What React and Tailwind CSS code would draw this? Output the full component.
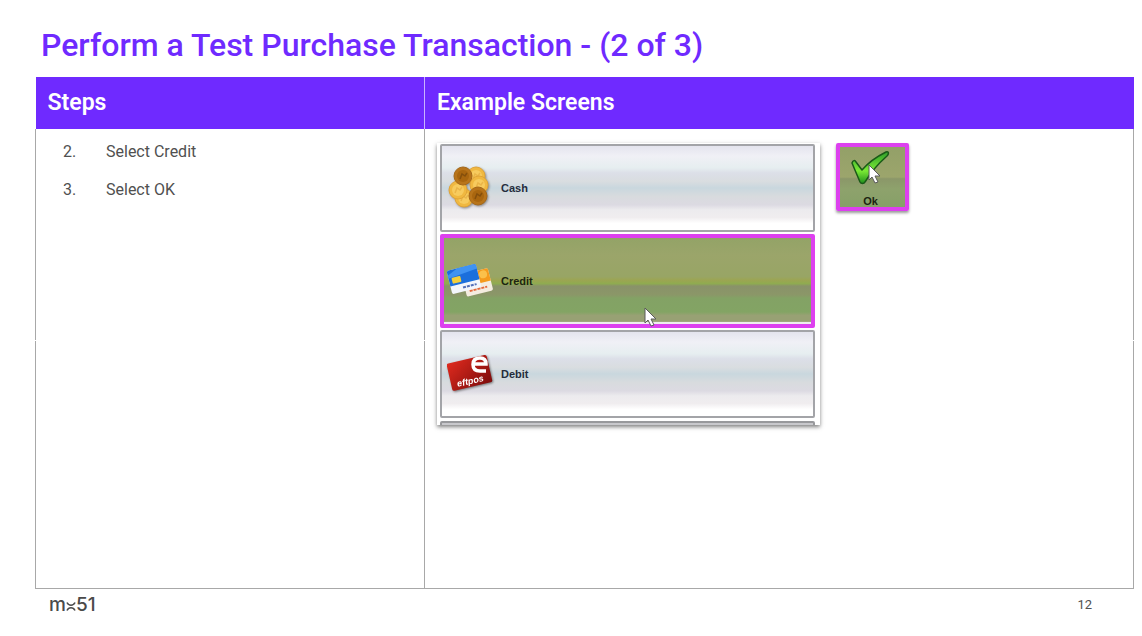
import React from 'react';
import clsx from 'clsx';

// --- DATA ---
const STEPS = [
  { no: '2.', text: 'Select Credit' },
  { no: '3.', text: 'Select OK' },
];

const PAYMENTS = [
  { id: 'cash', label: 'Cash', Icon: CoinsIcon },
  { id: 'credit', label: 'Credit', Icon: CardsIcon, selected: true },
  { id: 'debit', label: 'Debit', Icon: EftposIcon },
];

// --- ICONS ---
function Coin({ x, y, dark }) {
  return (
    <g>
      <circle cx={x} cy={y} r="9" fill={dark ? '#b8741a' : '#f0b840'} stroke={dark ? '#a5681a' : '#e0a437'} strokeWidth="1" />
      <circle cx={x} cy={y} r="6" fill={dark ? '#a9660f' : '#f7cb5e'} />
      <path d={`M${x - 3} ${y + 3}l2-5 3 2 2-3`} fill="none" stroke={dark ? '#854f0c' : '#eab548'} strokeWidth="1.5" />
    </g>
  );
}

function CoinsIcon() {
  return (
    <svg width="44" height="44" viewBox="0 0 44 44" aria-hidden="true" className="shrink-0 drop-shadow-[1px_1px_1px_#55555599]">
      <Coin x={28} y={10} />
      <Coin x={16} y={32} />
      <Coin x={31} y={19} />
      <Coin x={10} y={24} />
      <Coin x={15} y={10} dark />
      <Coin x={30} y={30} dark />
    </svg>
  );
}

function CardsIcon() {
  return (
    <svg width="46" height="44" viewBox="0 0 46 44" aria-hidden="true" className="shrink-0">
      <g transform="rotate(-14 30 24)">
        <rect x="17" y="12" width="27" height="23" rx="2" fill="#f4ece0" />
        <path d="M19 12h23a2 2 0 0 1 2 2v11H17V14a2 2 0 0 1 2-2z" fill="#f59a1c" />
        <circle cx="38" cy="17" r="4" fill="#fbc04a" />
        <path d="M21 30h18" stroke="#e5683a" strokeWidth="2" strokeDasharray="3 1" />
      </g>
      <g transform="rotate(-14 17 20)">
        <rect x="2" y="8" width="30" height="24" rx="2" fill="#f3f6fb" />
        <path d="M4 8h26a2 2 0 0 1 2 2v14H2V10a2 2 0 0 1 2-2z" fill="#1b6fdc" />
        <path d="M13 8h17a2 2 0 0 1 2 2v3L2 16v-3z" fill="#3f93f2" />
        <rect x="5" y="16" width="9" height="6" rx="1" fill="#f2cf3c" />
        <path d="M14 28h14" stroke="#5470b8" strokeWidth="2" strokeDasharray="3 1" />
      </g>
    </svg>
  );
}

function EftposIcon() {
  return (
    <svg width="46" height="44" viewBox="0 0 46 44" aria-hidden="true" className="shrink-0 drop-shadow-[1px_1px_1px_#33333399]">
      <defs>
        <linearGradient id="eftpos" x1="0" y1="0" x2="1" y2="1">
          <stop offset="0" stopColor="#e02a1e" />
          <stop offset="1" stopColor="#7d0c0c" />
        </linearGradient>
      </defs>
      <g transform="rotate(-13 22 21)">
        <rect x="2" y="7" width="41" height="28" rx="2" fill="url(#eftpos)" />
        <text x="8" y="32" fill="#fff" fontFamily="Liberation Sans, sans-serif" fontWeight="700" fontStyle="italic" fontSize="9">eftpos</text>
      </g>
      <path d="M26 12h13c0-4-2-6-6-6s-7 2-7 6.500 3 6.500 7 6.500h6" fill="none" stroke="#fff" strokeWidth="3.500" />
    </svg>
  );
}

function CheckIcon() {
  return (
    <svg width="40" height="34" viewBox="0 0 40 34" aria-hidden="true">
      <defs>
        <linearGradient id="check" x1="0" y1="0" x2="0" y2="1">
          <stop offset="0" stopColor="#2f9e2a" />
          <stop offset="0.6" stopColor="#7bea35" />
          <stop offset="1" stopColor="#1f8f1c" />
        </linearGradient>
      </defs>
      <path
        d="M1 12c1-3 3-3 4-1l6 8C17 12 25 6 35 1c3-1 3 2 1 4C28 12 20 21 14 31c-1 2-4 2-5 0z"
        fill="url(#check)"
        stroke="#1a5a17"
        strokeWidth="1.5"
        strokeLinejoin="round"
      />
    </svg>
  );
}

function Pointer({ className }) {
  return (
    <svg width="13" height="20" viewBox="0 0 13 20" aria-hidden="true" className={className}>
      <path d="M1 1v15l3-3 3 6 3-1-3-6h5z" fill="#fff" stroke="#5b5b5b" strokeWidth="1" strokeLinejoin="round" />
    </svg>
  );
}

function Logo() {
  return (
    <div className="flex items-baseline font-[Inter,sans-serif] text-[19px] leading-6 font-medium text-[#4a4a4a]" aria-label="mx51">
      <span>m</span>
      <svg width="10" height="9" viewBox="0 0 10 9" aria-hidden="true">
        <path d="M1 .5c1 2 2 2.700 4 2.700S8 2.500 9 .5M1 8.500c1-2 2-2.700 4-2.700s3 .7 4 2.700" fill="none" stroke="currentColor" strokeWidth="1.600" />
      </svg>
      <span>51</span>
    </div>
  );
}

// --- POS SCREENS ---
function PaymentButton({ label, Icon, selected }) {
  return (
    <button
      type="button"
      className={clsx(
        'relative flex w-full shrink-0 items-center gap-[7px] rounded-xs text-left text-[11px] font-bold',
        selected
          ? 'h-[94px] border-4 border-[#dd40ef] bg-[linear-gradient(#93a367_0%,#9ba56a_20%,#98a565_45%,#9ca552_49%,#8fab50_53%,#899269_56%,#8b9768_66%,#83a265_70%,#83a464_86%,#98a174_90%,#98a174_97%,#eeeeee_98%)] pr-1 pl-0.5 text-[#1c2412]'
          : 'h-[88px] border-2 border-[#a3a4a8] bg-[linear-gradient(#e4e4ee_0%,#f0f0f6_12%,#e6eef0_26%,#dcdfe8_32%,#d9dde0_42%,#c9d7de_50%,#d8dbde_60%,#dcdae2_70%,#ecebee_76%,#f0edef_85%,#ffffff_92%)] px-1 text-[#252d3c]'
      )}
    >
      <span className="flex w-12 justify-center">
        <Icon />
      </span>
      {label}
      {selected && <Pointer className="absolute top-[69px] left-[200px]" />}
    </button>
  );
}

function PaymentScreen() {
  return (
    <div className="flex h-[282px] w-[383px] shrink-0 flex-col gap-0.5 overflow-hidden bg-white pt-px pr-[5px] pl-[3px] font-['Liberation_Sans',sans-serif] shadow-[0_2px_4px_#00000080]">
      {PAYMENTS.map(({ id, ...p }) => <PaymentButton key={id} {...p} />)}
      <div className="mt-px h-2 shrink-0 rounded-xs border-2 border-[#98999c] bg-[#c8c8cc]" />
    </div>
  );
}

function OkButton() {
  return (
    <button
      type="button"
      className="relative flex h-[68px] w-[73px] shrink-0 flex-col items-center justify-between rounded-xs border-4 border-[#dd40ef] bg-[linear-gradient(#93a068_0%,#9ca56c_50%,#8b9769_53%,#8ea26c_70%,#86a068_100%)] pt-1 pr-1 font-['Liberation_Sans',sans-serif] text-[11px] leading-3 font-bold text-[#1c2412] shadow-[0_2px_3px_#00000066]"
    >
      <CheckIcon />
      Ok
      <Pointer className="absolute top-[17px] left-[28px]" />
    </button>
  );
}

// Short break in the column rule
function RuleBreak({ className }) {
  return <span className={clsx('absolute top-[211px] h-px w-0.5 bg-white', className)} />;
}

export default function App() {
  return (
    <main className="min-h-screen bg-white pt-6 pr-2 pl-[35px] font-[Roboto,sans-serif] text-[#505050]">
      <h1 className="pl-1.5 text-[32px] leading-[42px] font-medium text-[#6f2aff]">Perform a Test Purchase Transaction - (2 of 3)</h1>

      <table className="mt-[11px] w-full table-fixed border-collapse">
        <thead>
          <tr className="h-[52px] bg-[#6f2aff] text-left text-[23px] leading-7 text-white">
            <th className="w-[389px] border-r border-[#c9b3ff] px-3 py-0 font-semibold">Steps</th>
            <th className="px-3 py-0 font-semibold">Example Screens</th>
          </tr>
        </thead>
        <tbody>
          <tr className="h-[459px] align-top">
            <td className="relative border border-t-0 border-[#a8a8a8] pt-[11px] pl-[27px]">
              <ol className="space-y-[14px] text-[16px] leading-6">
                {STEPS.map(s => (
                  <li key={s.no} className="flex">
                    <span className="w-[43px]">{s.no}</span>
                    {s.text}
                  </li>
                ))}
              </ol>
              <RuleBreak className="-left-px" />
              <RuleBreak className="-right-px" />
            </td>
            <td className="relative border border-t-0 border-[#a8a8a8] pt-[14px] pl-3">
              <div className="flex items-start gap-4">
                <PaymentScreen />
                <OkButton />
              </div>
              <RuleBreak className="-right-px" />
            </td>
          </tr>
        </tbody>
      </table>

      <footer className="flex items-center justify-between pt-1 pr-[42px] pl-[14px]">
        <Logo />
        <span className="text-[13px] leading-6">12</span>
      </footer>
    </main>
  );
}
